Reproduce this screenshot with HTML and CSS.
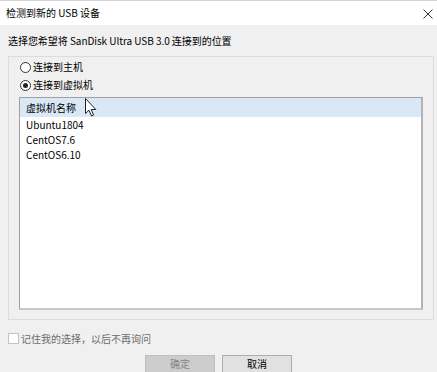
FILE: index.html
```html
<!DOCTYPE html>
<html lang="zh-CN">
<head>
<meta charset="utf-8">
<title>检测到新的 USB 设备</title>
<link rel="stylesheet" href="styles.css">
</head>
<body>
<div class="dialog">
  <div class="titlebar">
    <span class="title">检测到新的 USB 设备</span>
    <svg class="close" width="10" height="10" viewBox="0 0 10 10"><path d="M0.5 0.5 L9.5 9.5 M9.5 0.5 L0.5 9.5" stroke="#333" stroke-width="1" fill="none"/></svg>
  </div>
  <div class="content">
    <div class="prompt">选择您希望将 SanDisk Ultra USB 3.0 连接到的位置</div>
    <div class="group">
      <label class="radio"><span class="dot"></span>连接到主机</label>
      <label class="radio checked"><span class="dot"></span>连接到虚拟机</label>
      <div class="listbox">
        <div class="header">虚拟机名称</div>
        <div class="item">Ubuntu1804</div>
        <div class="item">CentOS7.6</div>
        <div class="item">CentOS6.10</div>
      </div>
    </div>
    <label class="check"><span class="box"></span>记住我的选择，以后不再询问</label>
    <div class="buttons">
      <button class="btn disabled">确定</button>
      <button class="btn">取消</button>
    </div>
  </div>
  <svg class="cursor" width="13" height="20" viewBox="0 0 13 20"><path d="M0.5 0.5 L0.5 15.5 L4 12.2 L6.5 18 L8.6 17.1 L6.2 11.5 L10.8 11.5 Z" fill="#fff" stroke="#222" stroke-width="1" stroke-linejoin="miter"/></svg>
</div>
</body>
</html>
```
FILE: styles.css
```css
* { box-sizing: border-box; }
html, body { margin: 0; padding: 0; }
body {
  background: #f0f0f0;
  font-family: "Noto Sans CJK SC", "Noto Sans", sans-serif;
  font-size: 10px;
  color: #000;
  width: 437px;
  height: 372px;
  overflow: hidden;
}
.dialog { position: relative; height: 372px; }
.titlebar {
  height: 25px;
  background: #fff;
  border-top: 1px solid #d4d4d4;
  display: flex;
  align-items: center;
  justify-content: space-between;
  padding: 0 4px 0 6px;
}
.title { line-height: 14px; }
.close { margin-top: 1px; }
.content { padding: 0 4px 0 8px; }
.prompt { line-height: 14px; margin-top: 9px; letter-spacing: -0.05px; }
.group {
  margin-top: 8px;
  width: 426px;
  height: 264px;
  border: 1px solid #dcdcdc;
  padding: 1px 10px 0 10px;
}
.radio {
  display: flex;
  align-items: center;
  height: 18px;
  line-height: 18px;
}
.dot {
  width: 11px;
  height: 11px;
  border: 1px solid #333;
  border-radius: 50%;
  background: #fff;
  margin: 0 2px 0 1px;
  display: flex;
  align-items: center;
  justify-content: center;
}
.checked .dot::after {
  content: "";
  width: 5px;
  height: 5px;
  border-radius: 50%;
  background: #222;
}
.listbox {
  margin-top: 3px;
  width: 404px;
  height: 213px;
  background: #fff;
  border-top: 1px solid #a0a0a0;
  border-left: 1px solid #a0a0a0;
  border-right: 2px solid #b4b4b4;
  border-bottom: 2px solid #c8c8cc;
}
.header {
  height: 19px;
  line-height: 19px;
  background: #d9e7f7;
  padding-left: 6px;
}
.item {
  height: 15px;
  line-height: 15px;
  padding-left: 6px;
}
.check {
  display: flex;
  align-items: center;
  margin-top: 11px;
  height: 14px;
  color: #6d6d6d;
}
.box {
  width: 11px;
  height: 11px;
  border: 1px solid #c4c4c4;
  background: #fff;
  margin-right: 2px;
}
.buttons {
  display: flex;
  justify-content: center;
  gap: 7px;
  margin-top: 10px;
  padding-right: 4px;
}
.btn {
  width: 70px;
  height: 23px;
  font-family: inherit;
  font-size: 10px;
  line-height: 14px;
  background: #e1e1e1;
  border: 1px solid #adadad;
  color: #000;
  padding: 0 0 5px 0;
}
.btn.disabled {
  background: #cccccc;
  border-color: #bfbfbf;
  color: #838383;
}
.cursor { position: absolute; left: 85px; top: 98px; }
```
